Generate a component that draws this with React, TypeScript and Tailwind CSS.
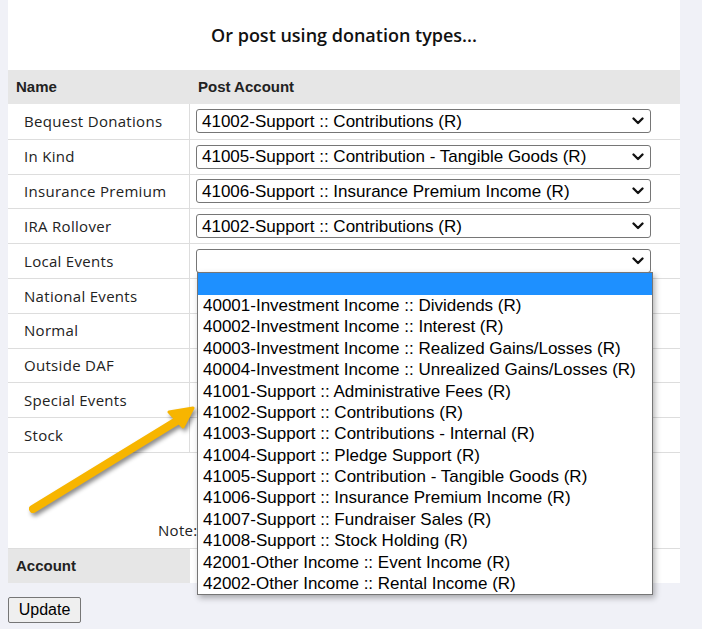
import React from "react";

const rows: { name: string; value?: string }[] = [
  { name: "Bequest Donations", value: "41002-Support :: Contributions (R)" },
  { name: "In Kind", value: "41005-Support :: Contribution - Tangible Goods (R)" },
  { name: "Insurance Premium", value: "41006-Support :: Insurance Premium Income (R)" },
  { name: "IRA Rollover", value: "41002-Support :: Contributions (R)" },
  { name: "Local Events", value: "" },
  { name: "National Events" },
  { name: "Normal" },
  { name: "Outside DAF" },
  { name: "Special Events" },
  { name: "Stock" },
];

const options = [
  "40001-Investment Income :: Dividends (R)",
  "40002-Investment Income :: Interest (R)",
  "40003-Investment Income :: Realized Gains/Losses (R)",
  "40004-Investment Income :: Unrealized Gains/Losses (R)",
  "41001-Support :: Administrative Fees (R)",
  "41002-Support :: Contributions (R)",
  "41003-Support :: Contributions - Internal (R)",
  "41004-Support :: Pledge Support (R)",
  "41005-Support :: Contribution - Tangible Goods (R)",
  "41006-Support :: Insurance Premium Income (R)",
  "41007-Support :: Fundraiser Sales (R)",
  "41008-Support :: Stock Holding (R)",
  "42001-Other Income :: Event Income (R)",
  "42002-Other Income :: Rental Income (R)",
];

const Chevron = () => (
  <svg width="12" height="8" viewBox="0 0 12 8" fill="none">
    <path d="M1.5 1.5 L6 6 L10.5 1.5" stroke="#111" strokeWidth="2.3" strokeLinecap="round" strokeLinejoin="round" />
  </svg>
);

const FakeSelect = ({ value }: { value: string }) => (
  <div className="flex h-6 w-[455px] items-center justify-between rounded-[3px] border border-[#767676] bg-white pl-[5px] pr-[6px] font-['Liberation_Sans',Arial,sans-serif] text-[17px] text-black">
    <span className="whitespace-nowrap pt-[1px]">{value}</span>
    <Chevron />
  </div>
);

const App = () => {
  return (
    <div className="relative min-h-[629px] bg-[#f0f1f7] pl-2 font-['Open_Sans',sans-serif]">
      <div className="w-[672px] bg-white">
        {/* Title */}
        <div className="flex h-[70px] items-center justify-center text-[18px] font-semibold text-[#111]">
          Or post using donation types...
        </div>

        {/* Header */}
        <div className="grid h-[34px] grid-cols-[182px_1fr] items-center bg-[#e6e6e6] font-['Liberation_Sans',Arial,sans-serif] text-[15px] font-bold text-[#222]">
          <div className="pl-2">Name</div>
          <div className="pl-2">Post Account</div>
        </div>

        {/* Rows */}
        {rows.map((r, i) => (
          <div
            key={r.name}
            className={`grid h-[34.8px] grid-cols-[182px_1fr] ${i > 0 ? "border-t border-[#dddddd]" : ""}`}
          >
            <div className="flex items-center border-r border-[#dddddd] pl-4 text-[15px] tracking-[0.3px] text-[#222]">{r.name}</div>
            <div className="flex items-center pl-[6px]">
              {r.value !== undefined && <FakeSelect value={r.value} />}
            </div>
          </div>
        ))}

        {/* Note area */}
        <div className="flex h-[96px] items-end border-t border-[#dddddd] pb-[6px] pl-[150px] text-[15px] tracking-[0.3px] text-[#222]">
          Note:
        </div>

        {/* Account header */}
        <div className="grid h-[35px] grid-cols-[182px_1fr] border-t border-[#dddddd]">
          <div className="flex items-center bg-[#e6e6e6] pl-2 font-['Liberation_Sans',Arial,sans-serif] text-[15px] font-bold text-[#222]">
            Account
          </div>
          <div />
        </div>
      </div>

      <div className="pt-[14px]">
        <button className="h-[26px] w-[73px] rounded-[2px] border border-[#767676] bg-[#efefef] font-['Liberation_Sans',Arial,sans-serif] text-[16px] text-black">
          Update
        </button>
      </div>

      {/* Open dropdown list */}
      <div className="absolute left-[197px] top-[272px] w-[456px] border border-[#767676] bg-white font-['Liberation_Sans',Arial,sans-serif] text-[17px] text-black shadow-[2px_3px_6px_rgba(0,0,0,0.3)]">
        <div className="h-[22px] bg-[#1e90ff]" />
        {options.map((o) => (
          <div key={o} className="flex h-[21.4px] items-center whitespace-nowrap pl-[5px]">
            {o}
          </div>
        ))}
      </div>

      {/* Annotation arrow */}
      <svg
        className="pointer-events-none absolute left-0 top-0"
        width="702"
        height="629"
        viewBox="0 0 702 629"
        style={{ filter: "drop-shadow(2px 3px 2px rgba(0,0,0,0.45))" }}
      >
        <line x1="33" y1="509" x2="180" y2="419" stroke="#f7b500" strokeWidth="8" strokeLinecap="round" />
        <polygon points="193,408 169,412 183,427" fill="#f7b500" stroke="#f7b500" strokeWidth="3" strokeLinejoin="round" />
      </svg>
    </div>
  );
};

export default App;
